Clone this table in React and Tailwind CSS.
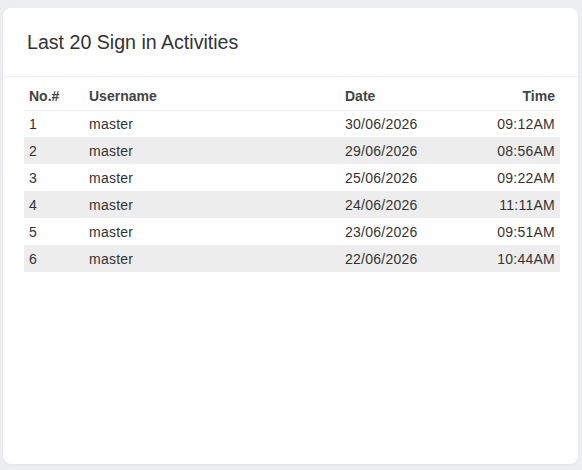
import React from 'react';

const rows = [
  { no: 1, user: 'master', date: '30/06/2026', time: '09:12AM' },
  { no: 2, user: 'master', date: '29/06/2026', time: '08:56AM' },
  { no: 3, user: 'master', date: '25/06/2026', time: '09:22AM' },
  { no: 4, user: 'master', date: '24/06/2026', time: '11:11AM' },
  { no: 5, user: 'master', date: '23/06/2026', time: '09:51AM' },
  { no: 6, user: 'master', date: '22/06/2026', time: '10:44AM' },
];

export default function App() {
  return (
    <div className="h-[470px] w-[582px] bg-[#edeef2] pt-2 pl-[3px] font-['Liberation_Sans',Arial,sans-serif]">
      <div className="h-[456px] w-[575px] rounded-lg bg-white shadow-[0_1px_3px_rgba(0,0,0,0.06)]">
        {/* Card header */}
        <div className="border-b border-[#ebedf2] px-6 py-[22px]">
          <h3 className="text-[19.6px] leading-[24px] text-[#333]">Last 20 Sign in Activities</h3>
        </div>

        {/* Table */}
        <div className="px-[21px] pt-2">
          <table className="w-[536px] table-fixed border-collapse text-[14px] text-[#333]">
            <colgroup>
              <col className="w-[60px]" />
              <col className="w-[256px]" />
              <col className="w-[120px]" />
              <col />
            </colgroup>
            <thead>
              <tr className="h-[25px] border-b border-[#ebedf2] text-[#444]">
                <th className="px-[5px] pb-px text-left font-bold">No.#</th>
                <th className="px-[5px] pb-px text-left font-bold">Username</th>
                <th className="px-[5px] pb-px text-left font-bold">Date</th>
                <th className="px-[5px] pb-px text-right font-bold">Time</th>
              </tr>
            </thead>
            <tbody className="tracking-[0.25px]">
              {rows.map((r, i) => (
                <tr key={r.no} className={`h-[27px] ${i % 2 === 1 ? 'bg-[#ededed]' : 'bg-white'}`}>
                  <td className="px-[5px] pt-px">{r.no}</td>
                  <td className="px-[5px] pt-px">{r.user}</td>
                  <td className="px-[5px] pt-px">{r.date}</td>
                  <td className="px-[5px] pt-px text-right">{r.time}</td>
                </tr>
              ))}
            </tbody>
          </table>
        </div>
      </div>
    </div>
  );
}
